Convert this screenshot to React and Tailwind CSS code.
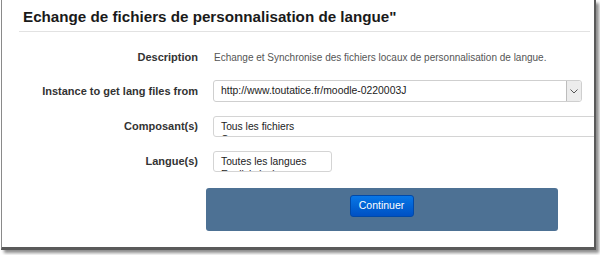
export default function App() {
  return (
    <div className="w-[600px] h-[255px] bg-white relative overflow-hidden" style={{ fontFamily: '"Liberation Sans", Arial, sans-serif' }}>
      <div className="ml-[1px] w-[595px] h-[250px] bg-white border-l border-l-[#8a8a8a] border-r-2 border-r-[#5a5a5a] border-b-[3px] border-b-[#5a5a5a] shadow-[3px_3px_3px_rgba(0,0,0,0.45)] overflow-hidden">
        <div className="pl-[21px] pr-[2px]">
          <h1 className="pt-[7px] h-[31px] text-[15.2px] leading-[20px] font-bold text-[#1a1a1a]">Echange de fichiers de personnalisation de langue"</h1>
          <div className="ml-[-4px] mr-[2px] border-t border-[#e2e2e2]"></div>
        </div>
        <div className="mt-[17px] flex flex-col">
          <div className="flex items-center h-[16px]">
            <div className="w-[196px] shrink-0 text-right text-[11px] font-bold text-[#333]">Description</div>
            <div className="ml-[16px] text-[10px] text-[#555]">Echange et Synchronise des fichiers locaux de personnalisation de langue.</div>
          </div>
          <div className="mt-[15px] flex items-center h-[22px]">
            <div className="w-[196px] shrink-0 text-right text-[11px] font-bold text-[#333]">Instance to get lang files from</div>
            <div className="ml-[15px] w-[369px] shrink-0 h-[22px] border border-[#cfcfcf] rounded-[3px] flex items-center justify-between text-[10.4px] text-[#222]">
              <span className="pl-[7px]">http://www.toutatice.fr/moodle-0220003J</span>
              <span className="w-[15px] h-[20px] border-l border-[#bdbdbd] bg-[#ececec] flex items-center justify-center rounded-r-[3px]">
                <svg width="8" height="5" viewBox="0 0 8 5"><path d="M0.5 0.5 L4 4 L7.5 0.5" fill="none" stroke="#555" strokeWidth="1" /></svg>
              </span>
            </div>
          </div>
          <div className="mt-[14px] flex items-center h-[21px]">
            <div className="w-[196px] shrink-0 text-right text-[11px] font-bold text-[#333]">Composant(s)</div>
            <div className="ml-[15px] w-[420px] h-[21px] shrink-0 border border-[#d4d4d4] rounded-[3px] overflow-hidden text-[10.3px] leading-[13px] text-[#222] pl-[7px] pt-[3px]">
              <div>Tous les fichiers</div>
              <div>Core</div>
            </div>
          </div>
          <div className="mt-[14px] flex items-center h-[21px]">
            <div className="w-[196px] shrink-0 text-right text-[11px] font-bold text-[#333]">Langue(s)</div>
            <div className="ml-[15px] w-[119px] h-[21px] shrink-0 border border-[#d4d4d4] rounded-[3px] overflow-hidden text-[10.3px] leading-[13px] text-[#222] pl-[7px] pt-[3px]">
              <div>Toutes les langues</div>
              <div>English (en)</div>
            </div>
          </div>
          <div className="mt-[16px] ml-[204px] w-[352px] h-[43px] bg-[#4d7194] rounded-[3px] flex justify-center pt-[7px]">
            <button className="ml-[-1px] w-[64px] h-[22px] rounded-[3px] text-white text-[10.5px] bg-gradient-to-b from-[#0a77e6] to-[#0050c4] border border-[#0049a8] flex items-center justify-center">Continuer</button>
          </div>
        </div>
      </div>
    </div>
  );
}
